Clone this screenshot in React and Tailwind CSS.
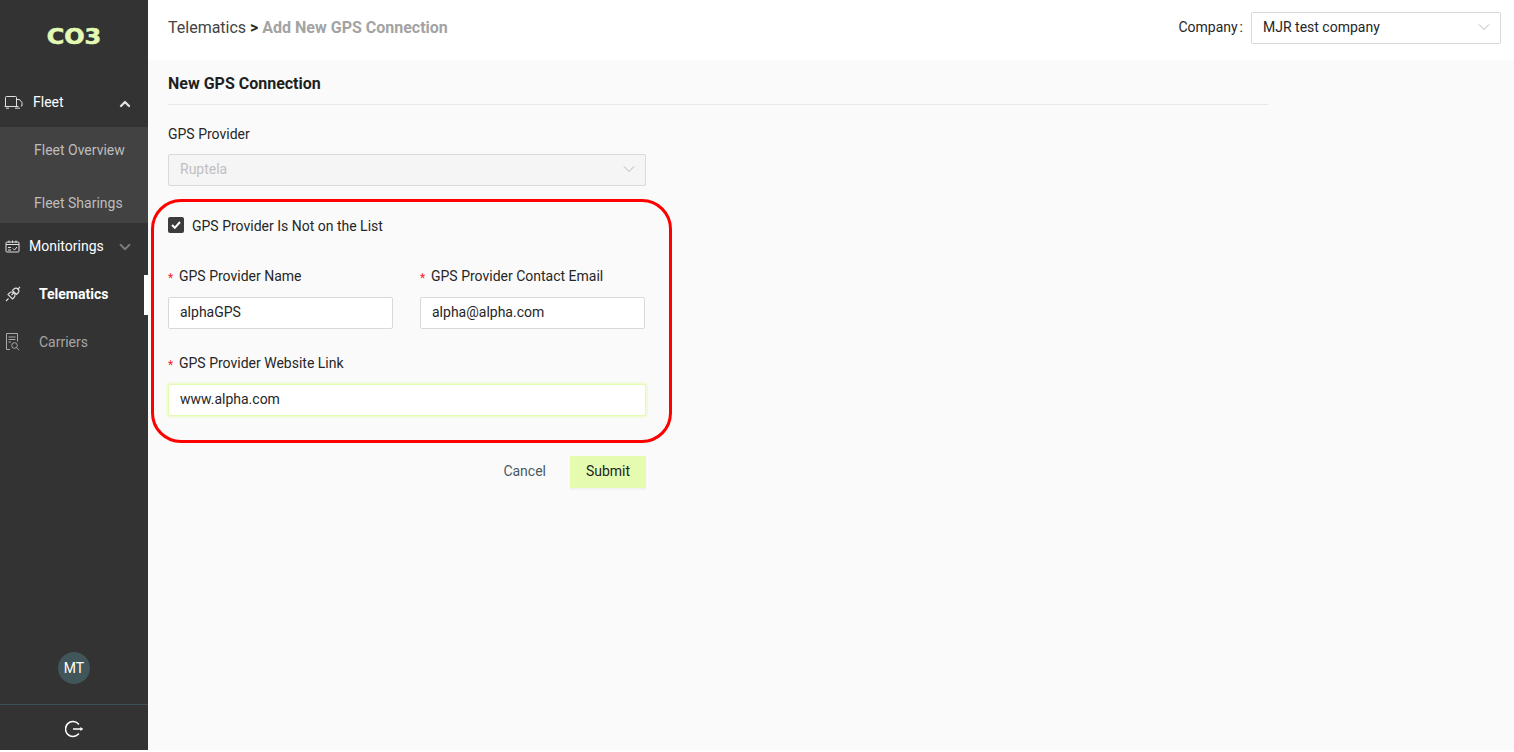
import { ChevronDown, ChevronUp } from "lucide-react";

const TruckIcon = () => (
  <svg width="19" height="13" viewBox="0 0 19 13" fill="none" stroke="#e0e0e0" strokeWidth="1">
    <path d="M1.500 10V1.500a1 1 0 0 1 1-1h9a1 1 0 0 1 1 1v8.500" />
    <path d="M12.500 3.500h3l2.500 3v3.500h-1" />
    <path d="M.5 10.500h14" />
    <path d="M2 12.200h3M11 12.200h5" />
  </svg>
);

const CalendarIcon = () => (
  <svg width="15" height="13" viewBox="0 0 15 13" fill="none" stroke="#e0e0e0" strokeWidth="1">
    <rect x="1" y="2" width="13" height="10" rx="1" />
    <path d="M1 4.500h13M4 .5v2.500M7.500 .5v2.500M11 .5v2.500" />
    <path d="M3 7.500h3M3 10h3M8 8.500l1.500 1.500 2.500-3" />
  </svg>
);

const PlugIcon = () => (
  <svg width="16" height="16" viewBox="0 0 16 16" fill="none" stroke="#e0e0e0" strokeWidth="1.100">
    <path d="M1 15l2.500-2.500" />
    <path d="M3 8.500l4.500 4.500 1.500-1.500a3 3 0 0 0 0-4.500 3 3 0 0 0-4.500 0z" />
    <path d="M9 6.500L6.500 9" />
    <path d="M7.500 4.500l1.500-1.500a2.600 2.600 0 0 1 4 4l-1.500 1.500z" />
    <path d="M12.500 3.500L15 1" />
  </svg>
);

const CarrierIcon = () => (
  <svg width="15" height="18" viewBox="0 0 15 18" fill="none" stroke="#a8a8a8" strokeWidth="1">
    <path d="M5 16.500H1.500V.5h11v8" />
    <path d="M3.500 4h7M3.500 6.500h7M3.500 9h2.500" />
    <circle cx="9.500" cy="12.500" r="2.800" />
    <path d="M11.500 14.700l2.500 2.500" />
  </svg>
);

const LogoutIcon = () => (
  <svg width="20" height="18" viewBox="0 0 20 18" fill="none" stroke="#ffffff" strokeWidth="1.500" className="ml-[2px]">
    <path d="M13.500 3.900a7.500 7.500 0 1 0 0 10.200" strokeLinecap="round" />
    <path d="M8 9h8" />
    <path d="M15.500 7.500L18 9l-2.500 1.500z" fill="#ffffff" strokeWidth="0.500" />
  </svg>
);

const SelectChevron = ({ color = "#b5b5b5" }) => (
  <svg width="12" height="8" viewBox="0 0 12 8" fill="none" stroke={color} strokeWidth="1">
    <path d="M1 1.500l5 5 5-5" />
  </svg>
);

const Required = ({ children }) => (
  <label className="flex items-center h-[20px] text-[14px] text-[#262626]">
    <span className="w-[11px] text-[#f5222d] text-[12px] leading-none pt-[3px]">*</span>
    {children}
  </label>
);

const TextBox = ({ value, className = "w-[225px] border-[#d9d9d9]" }) => (
  <div className={`h-[32px] pb-[2px] bg-white border rounded-[2px] px-[11px] flex items-center text-[14px] text-[#262626] ${className}`}>
    {value}
  </div>
);

const App = () => {
  return (
    <div
      className="flex h-[752px] w-[1514px] overflow-hidden bg-white text-[14px]"
      style={{ fontFamily: "Roboto, sans-serif" }}
    >
      <aside className="w-[148px] shrink-0 h-[750px] bg-[#333333] flex flex-col">
        <div className="h-[78px] pt-[20px] flex justify-center">
          <span
            className="text-[#e4fab4] text-[21px] leading-[34px] font-bold scale-x-[1.14] [-webkit-text-stroke:0.6px_#e4fab4]"
            style={{ fontFamily: "'DejaVu Sans', sans-serif" }}
          >
            CO3
          </span>
        </div>

        <div className="h-[49px] flex items-center pl-[4px] text-white">
          <TruckIcon />
          <span className="ml-[10px]">Fleet</span>
          <ChevronUp size={16} strokeWidth={3.500} className="ml-[53px] mt-[3px] text-[#e0e0e0]" />
        </div>

        <div className="h-[96px] bg-[#424242] text-[#bdbdbd] pl-[34px]">
          <div className="h-[47px] flex items-center">Fleet Overview</div>
          <div className="h-[49px] pt-[9px] flex items-center">Fleet Sharings</div>
        </div>

        <div className="h-[47px] flex items-center pl-[5px] text-white">
          <CalendarIcon />
          <span className="ml-[9px]">Monitorings</span>
          <ChevronDown size={18} strokeWidth={2.500} className="ml-[12px] text-[#7a7a7a]" />
        </div>

        <div className="h-[48px] flex items-center pl-[5px] text-white font-bold relative">
          <PlugIcon />
          <span className="ml-[18px]">Telematics</span>
          <span className="absolute right-0 top-[5px] w-[4px] h-[40px] bg-white" />
        </div>

        <div className="h-[48px] flex items-center pl-[5px] text-[#a6a6a6]">
          <CarrierIcon />
          <span className="ml-[19px]">Carriers</span>
        </div>

        <div className="flex-1" />

        <div className="flex justify-center pb-[20px]">
          <div className="w-[32px] h-[32px] rounded-full bg-[#40565a] text-white flex items-center justify-center">
            MT
          </div>
        </div>
        <div className="h-[46px] pt-[2px] border-t border-[#3d5054] flex items-center justify-center">
          <LogoutIcon />
        </div>
      </aside>

      <div className="flex-1 flex flex-col">
        <header className="h-[60px] shrink-0 bg-white pl-[20px] pr-[13px] flex items-center justify-between">
          <div className="text-[16px] pb-[4px] text-[#434343]">
            Telematics <span className="font-bold text-[#262626]">&gt;</span>{" "}
            <span className="font-bold text-[#a3a3a3]">Add New GPS Connection</span>
          </div>
          <div className="flex items-center pb-[4px]">
            <span className="text-[#262626] mr-[8px] pb-[2px]">
              Company<span className="ml-[2px]">:</span>
            </span>
            <div className="w-[250px] h-[32px] pb-[2px] border border-[#d9d9d9] rounded-[2px] pl-[11px] pr-[10px] flex items-center justify-between text-[#262626]">
              MJR test company
              <SelectChevron />
            </div>
          </div>
        </header>

        <main className="flex-1 bg-[#fafafa] px-[20px] relative">
          <div className="w-[1100px] h-[45px] border-b border-[#e8e8e8] flex items-center text-[16px] font-bold text-[#1f1f1f] pt-[4px]">
            New GPS Connection
          </div>

          <div className="w-[478px]">
            <div className="mt-[19px] h-[20px] flex items-center text-[#262626]">GPS Provider</div>
            <div className="mt-[10px] h-[32px] pb-[2px] bg-[#f5f5f5] border border-[#d9d9d9] rounded-[2px] pl-[11px] pr-[10px] flex items-center justify-between text-[#bfbfbf]">
              Ruptela
              <SelectChevron />
            </div>

            <div className="mt-[30px] flex items-center h-[20px] text-[#262626]">
              <span className="w-[16px] h-[16px] -mt-[2px] rounded-[2px] bg-[#3c3c3c] flex items-center justify-center mr-[8px]">
                <svg width="10" height="8" viewBox="0 0 10 8" fill="none" stroke="#ffffff" strokeWidth="2">
                  <path d="M1 4l2.800 2.800L9 1" />
                </svg>
              </span>
              GPS Provider Is Not on the List
            </div>

            <div className="mt-[30px] flex gap-[27px]">
              <div>
                <Required>GPS Provider Name</Required>
                <div className="mt-[11px]">
                  <TextBox value="alphaGPS" />
                </div>
              </div>
              <div>
                <Required>GPS Provider Contact Email</Required>
                <div className="mt-[11px]">
                  <TextBox value="alpha@alpha.com" />
                </div>
              </div>
            </div>

            <div className="mt-[24px]">
              <Required>GPS Provider Website Link</Required>
              <div className="mt-[11px]">
                <TextBox
                  value="www.alpha.com"
                  className="w-[478px] border-[#e4fab4] shadow-[0_0_0_2px_#f1fbd9]"
                />
              </div>
            </div>

            <div className="mt-[40px] flex justify-end items-center">
              <span className="text-[#4a5a63] mr-[24px] pb-[2px]">Cancel</span>
              <div className="w-[76px] h-[32px] pb-[2px] bg-[#e4fbb0] text-[#1f1f1f] flex items-center justify-center shadow-[0_2px_0_rgba(0,0,0,0.03)]">
                Submit
              </div>
            </div>
          </div>

          {/* annotation drawn on top of the screenshot */}
          <div className="absolute left-[3px] top-[139px] w-[521px] h-[244px] border-[3px] border-[#ff0000] rounded-[30px] pointer-events-none" />
        </main>
        <div className="h-[2px] shrink-0 bg-white" />
      </div>
    </div>
  );
};

export default App;
